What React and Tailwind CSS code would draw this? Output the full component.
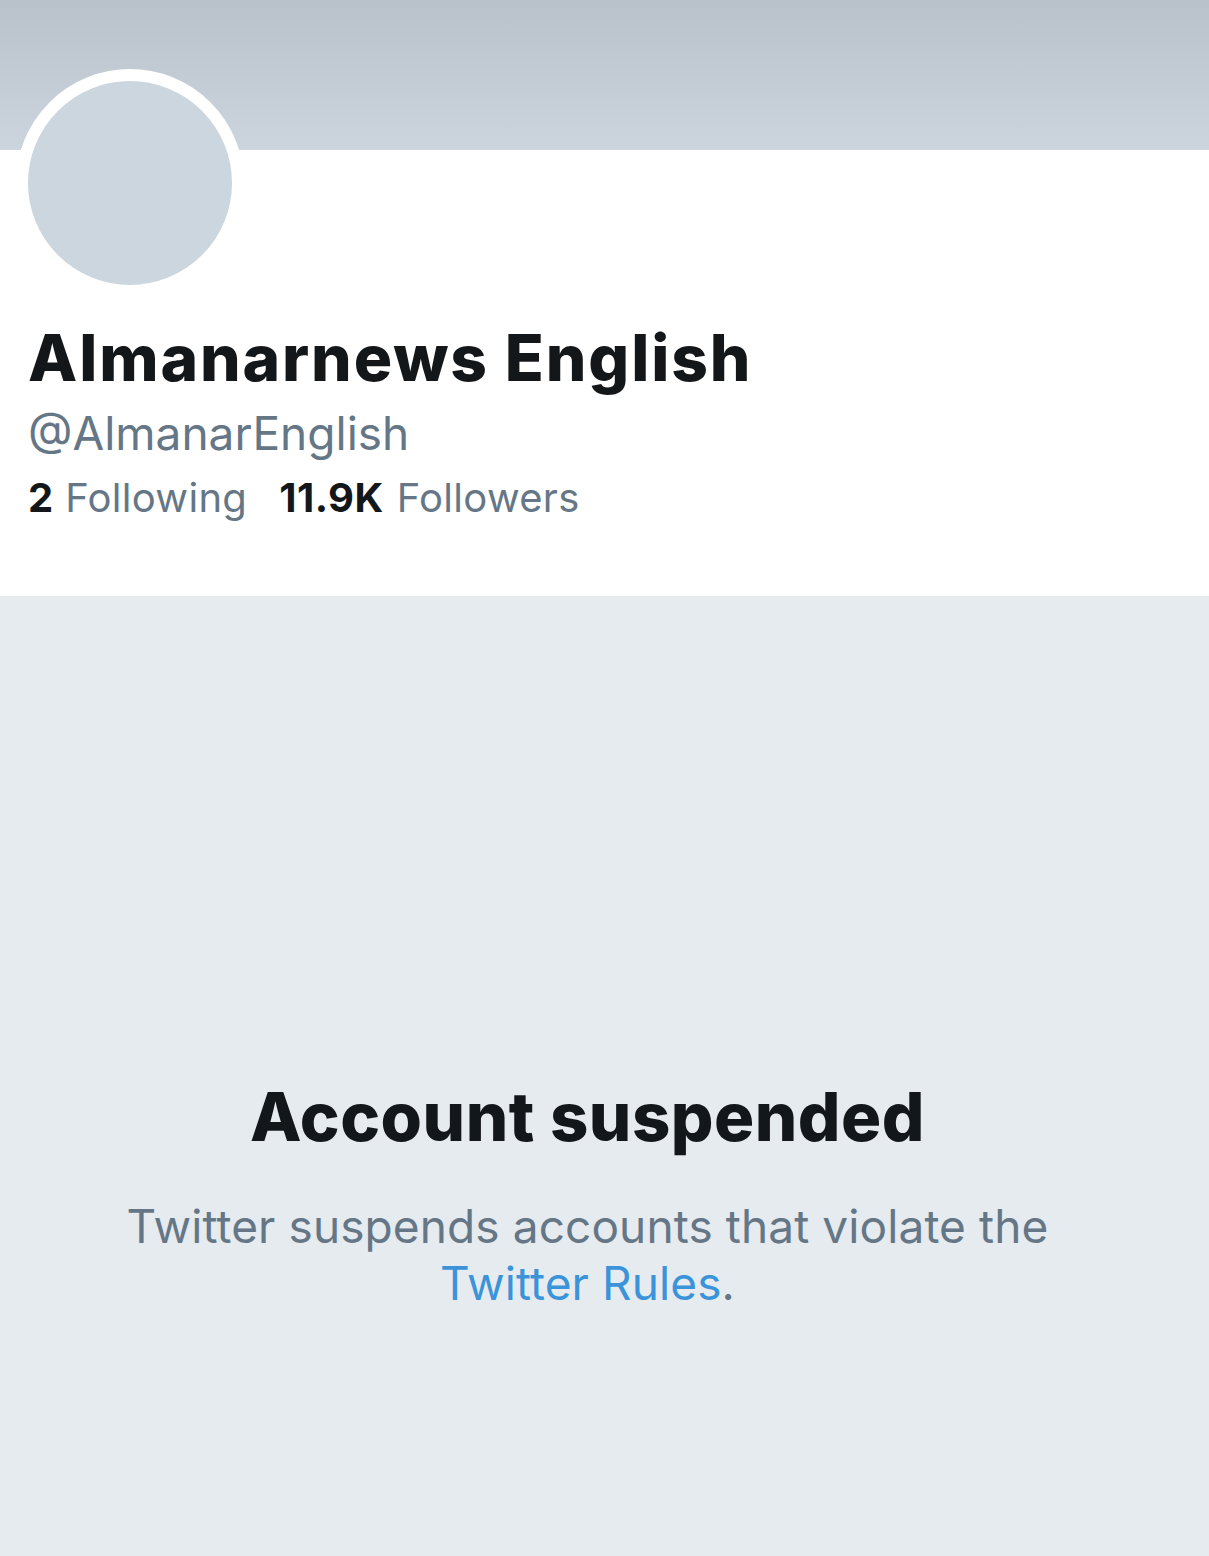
export default function App() {
  return (
    <div className="w-[1209px] h-[1556px] flex flex-col bg-white" style={{ fontFamily: 'Inter, "Noto Sans", sans-serif' }}>
      {/* banner */}
      <div className="h-[150px] shrink-0 bg-gradient-to-b from-[#b9c1ca] to-[#ccd5dd]" />

      {/* profile header */}
      <div className="bg-white px-[28px] pb-[78px] shrink-0">
        <div className="-mt-[81px] ml-[-12px] w-[228px] h-[228px] rounded-full border-[12px] border-white bg-[#ccd6de]" />
        <h1 className="mt-[29px] text-[64px] leading-[64px] font-extrabold text-[#14171a] tracking-[1.9px]">
          Almanarnews English
        </h1>
        <div className="mt-[20px] text-[46px] leading-[46px] text-[#657786]">@AlmanarEnglish</div>
        <div className="mt-[22px] flex items-baseline text-[40px] leading-[40px]">
          <span className="font-bold text-[#14171a]">2</span>
          <span className="ml-[12px] text-[#657786] tracking-[0.3px]">Following</span>
          <span className="ml-[32px] font-bold text-[#14171a] tracking-[0.5px]">11.9K</span>
          <span className="ml-[13px] text-[#657786] tracking-[0.3px]">Followers</span>
        </div>
      </div>

      {/* suspended notice */}
      <div className="flex-1 bg-[#e6ebf0] flex flex-col items-center pt-[487px] pr-[34px]">
        <h2 className="text-[67px] leading-[67px] font-extrabold text-[#14171a] tracking-[0.5px]">
          Account suspended
        </h2>
        <p className="mt-[48px] text-[46px] leading-[57px] text-[#657786] text-center tracking-[0.1px]">
          Twitter suspends accounts that violate the
          <br />
          <a href="#" className="text-[#3b94d9]">Twitter Rules</a>.
        </p>
      </div>
    </div>
  );
}
